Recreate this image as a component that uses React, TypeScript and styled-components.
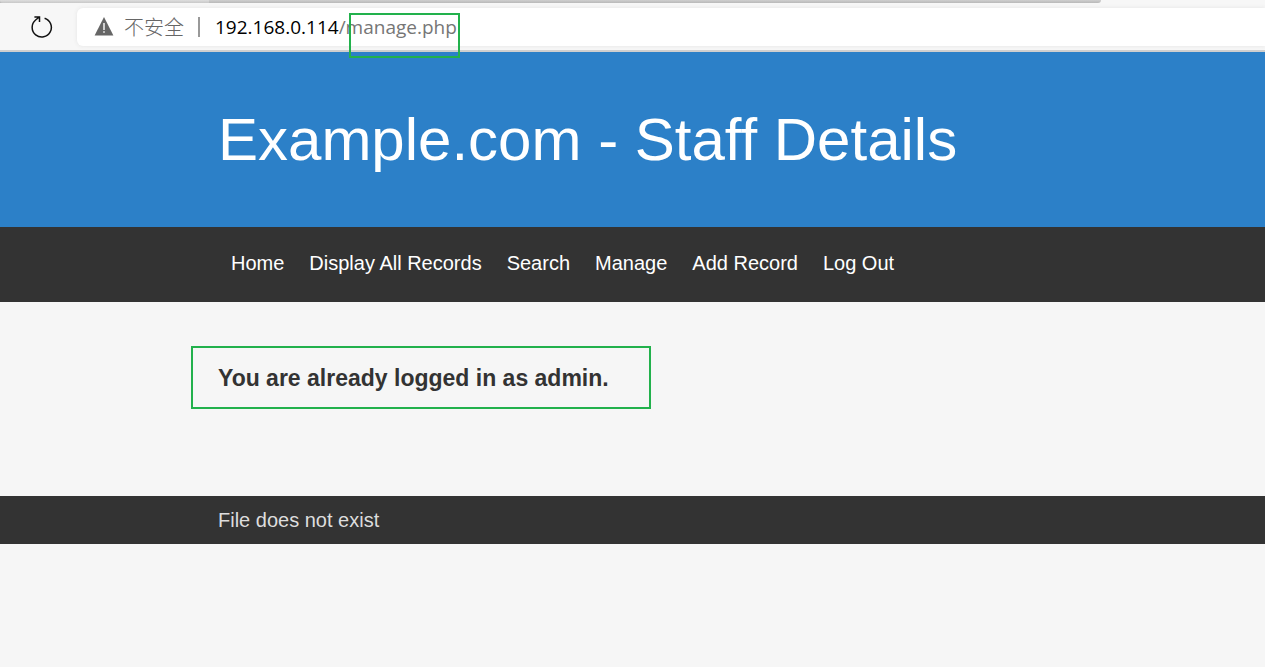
import React from "react";
import styled, { createGlobalStyle } from "styled-components";

const GlobalStyle = createGlobalStyle`
  *, *::before, *::after { box-sizing: border-box; }
  body {
    margin: 0;
    background: #f6f6f6;
    color: #333;
    font: 20px/24px "Liberation Sans", Arial, sans-serif;
  }
`;

const TabStrip = styled.div`
  display: flex;
  height: 3px;
  background: #f7f7f7;
`;

const Tabs = styled.div`
  display: flex;
  width: 87%;
  border-radius: 0 0 6px 0;
  background: linear-gradient(#cfcfcf, #b9b9b9);
`;

const FirstTab = styled.div`
  width: 19%;
  border-radius: 0 0 0 6px;
  background: linear-gradient(#dedede, #c8c8c8);
`;

const Toolbar = styled.div`
  display: flex;
  align-items: center;
  gap: 24px;
  height: 49px;
  padding: 2px 0 1px 30px;
  background: #f7f7f7;
  border-bottom: 2px solid #cfcfcf;
`;

const ReloadButton = styled.button`
  display: flex;
  padding: 0;
  border: 0;
  background: none;
  color: #111;
`;

const AddressBar = styled.div`
  display: flex;
  flex: 1;
  align-items: center;
  height: 38px;
  padding-left: 17px;
  border-radius: 6px 0 0 6px;
  background: #fff;
  box-shadow: 0 0 4px #e4e4e4;
  font: 19px/26px "Open Sans", "Noto Sans CJK SC", sans-serif;
  color: #000;
`;

const Security = styled.span`
  display: flex;
  align-items: center;
  gap: 10px;
  color: #666;
  font: 300 20px/26px "Noto Sans CJK SC", sans-serif;
`;

const Divider = styled.span`
  width: 2px;
  height: 20px;
  margin: 0 15px 0 14px;
  background: #999;
`;

const UrlPath = styled.span`
  color: #767676;
`;

const Marked = styled.span`
  position: relative;
`;

const Frame = styled.span<{ $inset: string }>`
  position: absolute;
  z-index: 1;
  inset: ${(p) => p.$inset};
  border: 2px solid #22b14c;
  pointer-events: none;
`;

const Container = styled.div`
  padding: 0 24px 0 218px;
`;

const Header = styled.header`
  padding: 53px 0;
  background: #2c80c8;
  color: #fff;
`;

const Title = styled.h1`
  margin: 0;
  font-size: 60px;
  line-height: 69px;
  font-weight: 400;
`;

const Nav = styled.nav`
  padding: 24px 0 27px;
  background: #333;
`;

const NavList = styled.ul`
  display: flex;
  flex-wrap: wrap;
  gap: 25px;
  margin: 0;
  padding: 0 0 0 13px;
  list-style: none;
`;

const NavLink = styled.a`
  color: #fff;
  text-decoration: none;
`;

const Main = styled.main`
  padding: 62px 0 104px;
`;

const Message = styled.h2`
  margin: 0;
  font-size: 23px;
  line-height: 28px;
  font-weight: 700;
`;

const Footer = styled.footer`
  padding: 12px 0;
  background: #333;
  color: #ddd;
`;

const links = ["Home", "Display All Records", "Search", "Manage", "Add Record", "Log Out"];

const ReloadIcon = () => (
  <svg width="23" height="24" viewBox="0 0 23 24" fill="none" stroke="currentColor" strokeWidth="1.5" aria-hidden="true">
    <path d="M14.6 3.2A9.6 9.6 0 1 1 5.6 5L9.3 2M4.4 1.9h5.1v5" />
  </svg>
);

const WarningIcon = () => (
  <svg width="20" height="20" viewBox="0 0 20 20" aria-hidden="true">
    <path d="M10 0 19.4 18.5H.6Z" fill="#666" />
    <path d="M9.3 6h1.4v7H9.3zM9.3 14.2h1.4v1.6H9.3z" fill="#fff" />
  </svg>
);

export default function App() {
  return (
    <>
      <GlobalStyle />
      <TabStrip>
        <Tabs>
          <FirstTab />
        </Tabs>
      </TabStrip>
      <Toolbar>
        <ReloadButton type="button" aria-label="Reload">
          <ReloadIcon />
        </ReloadButton>
        <AddressBar>
          <Security>
            <WarningIcon />
            不安全
          </Security>
          <Divider />
          <span>192.168.0.114</span>
          <UrlPath>
            /
            <Marked>
              manage.php
              <Frame $inset="-1px -3px -18px 3px" />
            </Marked>
          </UrlPath>
        </AddressBar>
      </Toolbar>
      <Header>
        <Container>
          <Title>Example.com - Staff Details</Title>
        </Container>
      </Header>
      <Nav>
        <Container>
          <NavList>
            {links.map((label) => (
              <li key={label}>
                <NavLink href="#">{label}</NavLink>
              </li>
            ))}
          </NavList>
        </Container>
      </Nav>
      <Main>
        <Container>
          <Message>
            <Marked>
              You are already logged in as admin.
              <Frame $inset="-19px -42px -18px -27px" />
            </Marked>
          </Message>
        </Container>
      </Main>
      <Footer>
        <Container>File does not exist</Container>
      </Footer>
    </>
  );
}
